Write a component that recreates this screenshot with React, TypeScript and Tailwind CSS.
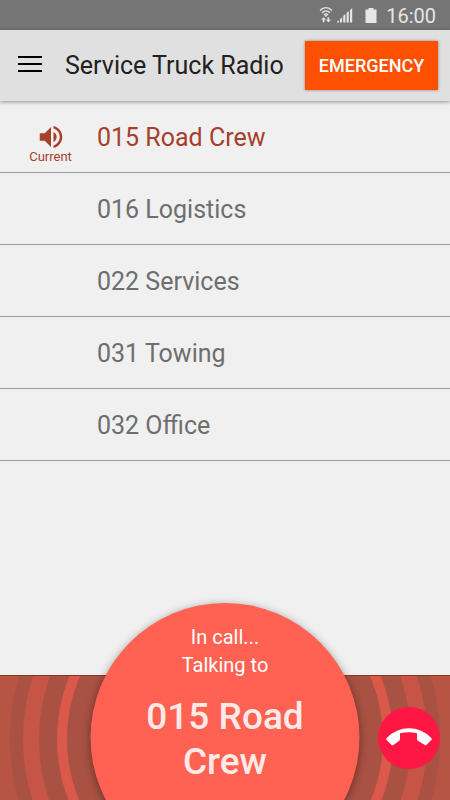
import { MdVolumeUp } from "react-icons/md";

type TChannel = { id: string; name: string };

const channels: TChannel[] = [
  { id: "015", name: "Road Crew" },
  { id: "016", name: "Logistics" },
  { id: "022", name: "Services" },
  { id: "031", name: "Towing" },
  { id: "032", name: "Office" },
];

const currentId = "015";

const StatusBar = () => (
  <div className="flex h-[30px] items-center justify-end bg-[#757575] pr-3.5 text-[#e6e6e6]">
    <svg viewBox="0 0 14 18" className="mr-1 h-[18px] w-3.5" fill="none" stroke="currentColor" aria-hidden="true">
      <path d="M1 4.5C4.5 0.7 9.5 0.7 13 4.5M3 6.8C5.5 4.1 8.5 4.1 11 6.8M5 9C6.4 7.4 7.6 7.4 9 9" strokeWidth="1.3" />
      <circle cx="7" cy="9.8" r="1" fill="currentColor" stroke="none" />
      <path d="M4.6 11.2 7 13.8H5.5V16.2H3.8V13.8H2.2zM9.4 16.4 7 13.8H8.5V11.4H10.2V13.8H11.8z" fill="currentColor" stroke="none" />
    </svg>
    <svg viewBox="0 0 16 16" className="mr-3 size-4" fill="currentColor" aria-hidden="true">
      <path d="M0 15.5V14.5L2 13.5V15.5zM3 15.5V12L5 10.5V15.5zM6.2 15.5V9L8.4 7V15.5zM9.6 15.5V6L11.8 4V15.5zM13 15.5V3L15.2 1V15.5z" />
    </svg>
    <svg viewBox="0 0 12 16" className="mr-[9px] h-4 w-3" fill="currentColor" aria-hidden="true">
      <path d="M3.5 1H8.5V2.5H11.5V16H0.5V2.5H3.5z" />
    </svg>
    <span className="pt-0.5 text-xl">16:00</span>
  </div>
);

const Header = () => (
  <header className="relative z-10 flex h-[71px] items-center bg-[#e0e0e0] pr-3 pl-[18px] shadow-[0_1px_4px_rgba(0,0,0,0.4)]">
    <button type="button" aria-label="Menu" className="flex w-6 flex-col gap-[5px] pb-[3px]">
      <span className="h-0.5 bg-black" />
      <span className="h-0.5 bg-black" />
      <span className="h-0.5 bg-black" />
    </button>
    <h1 className="ml-[23px] flex-1 text-[25px] whitespace-nowrap text-[#212121]">
      Service Truck Radio
    </h1>
    <button
      type="button"
      className="h-[49px] w-[133px] bg-[#ff4f00] text-lg font-medium text-white shadow-[0_0_3px_rgba(0,0,0,0.4)]"
    >
      EMERGENCY
    </button>
  </header>
);

const Channel = ({ channel }: { channel: TChannel }) => {
  const current = channel.id === currentId;

  return (
    <li className="border-b border-[#9a9a9a]">
      <button
        type="button"
        className={
          current
            ? "flex h-[71px] w-full items-center pt-[3px] text-left text-[#a63f2b]"
            : "flex h-[71px] w-full items-center pt-[3px] text-left text-[#6e6e6e]"
        }
      >
        <span className="flex w-[97px] flex-col items-center pt-2 pl-1">
          {current && (
            <>
              <MdVolumeUp className="size-[30px]" aria-hidden="true" />
              <span className="text-[13px] leading-[10px]">Current</span>
            </>
          )}
        </span>
        <span className="text-[25px]">
          {channel.id} {channel.name}
        </span>
      </button>
    </li>
  );
};

const Rings = () => (
  <svg
    viewBox="0 0 450 125"
    preserveAspectRatio="xMidYMin slice"
    className="absolute inset-0 size-full"
    fill="none"
    aria-hidden="true"
  >
    <rect width="450" height="125" fill="#b75443" />
    <circle cx="225" cy="63" r="215" fill="#a95142" />
    <circle cx="225" cy="63" r="194" stroke="#c75547" strokeWidth="16" />
    <circle cx="225" cy="63" r="163" stroke="#da594a" strokeWidth="10" />
  </svg>
);

const CallPanel = () => (
  <footer className="relative flex h-[125px] items-center justify-end border-t border-[#8a3a1c] pr-2.5">
    <Rings />
    <div className="absolute -top-[73px] left-1/2 flex size-[269px] -translate-x-1/2 flex-col items-center rounded-full bg-[#ff6152] pt-5 text-center text-white shadow-[0_2px_8px_rgba(0,0,0,0.4)]">
      <p className="text-xl leading-7">
        In call...
        <br />
        Talking to
      </p>
      <p className="mt-[15px] w-[180px] text-[37px] leading-[45px] font-medium text-[#ffeae8]">
        015 Road Crew
      </p>
    </div>
    <button
      type="button"
      aria-label="End call"
      className="relative size-[62px] rounded-full bg-[#ff1744]"
    >
      <svg viewBox="24 20 186 186" className="size-full" fill="white" aria-hidden="true">
        <path d="M50 113Q79 84 117 84Q155 84 184 113Q187 116 184 119L170 133Q167 136 163 133L144 121Q141 119 141 115V99Q117 93 90 99V115Q90 119 88 121L71 133Q67 136 64 133L50 119Q46 116 50 113z" />
      </svg>
    </button>
  </footer>
);

export default function App() {
  return (
    <div className="flex min-h-screen flex-col overflow-hidden bg-[#f0f0f0] font-[Roboto,sans-serif]">
      <StatusBar />
      <Header />
      <main className="flex-1">
        <ul>
          {channels.map((channel) => (
            <Channel key={channel.id} channel={channel} />
          ))}
        </ul>
      </main>
      <CallPanel />
    </div>
  );
}
